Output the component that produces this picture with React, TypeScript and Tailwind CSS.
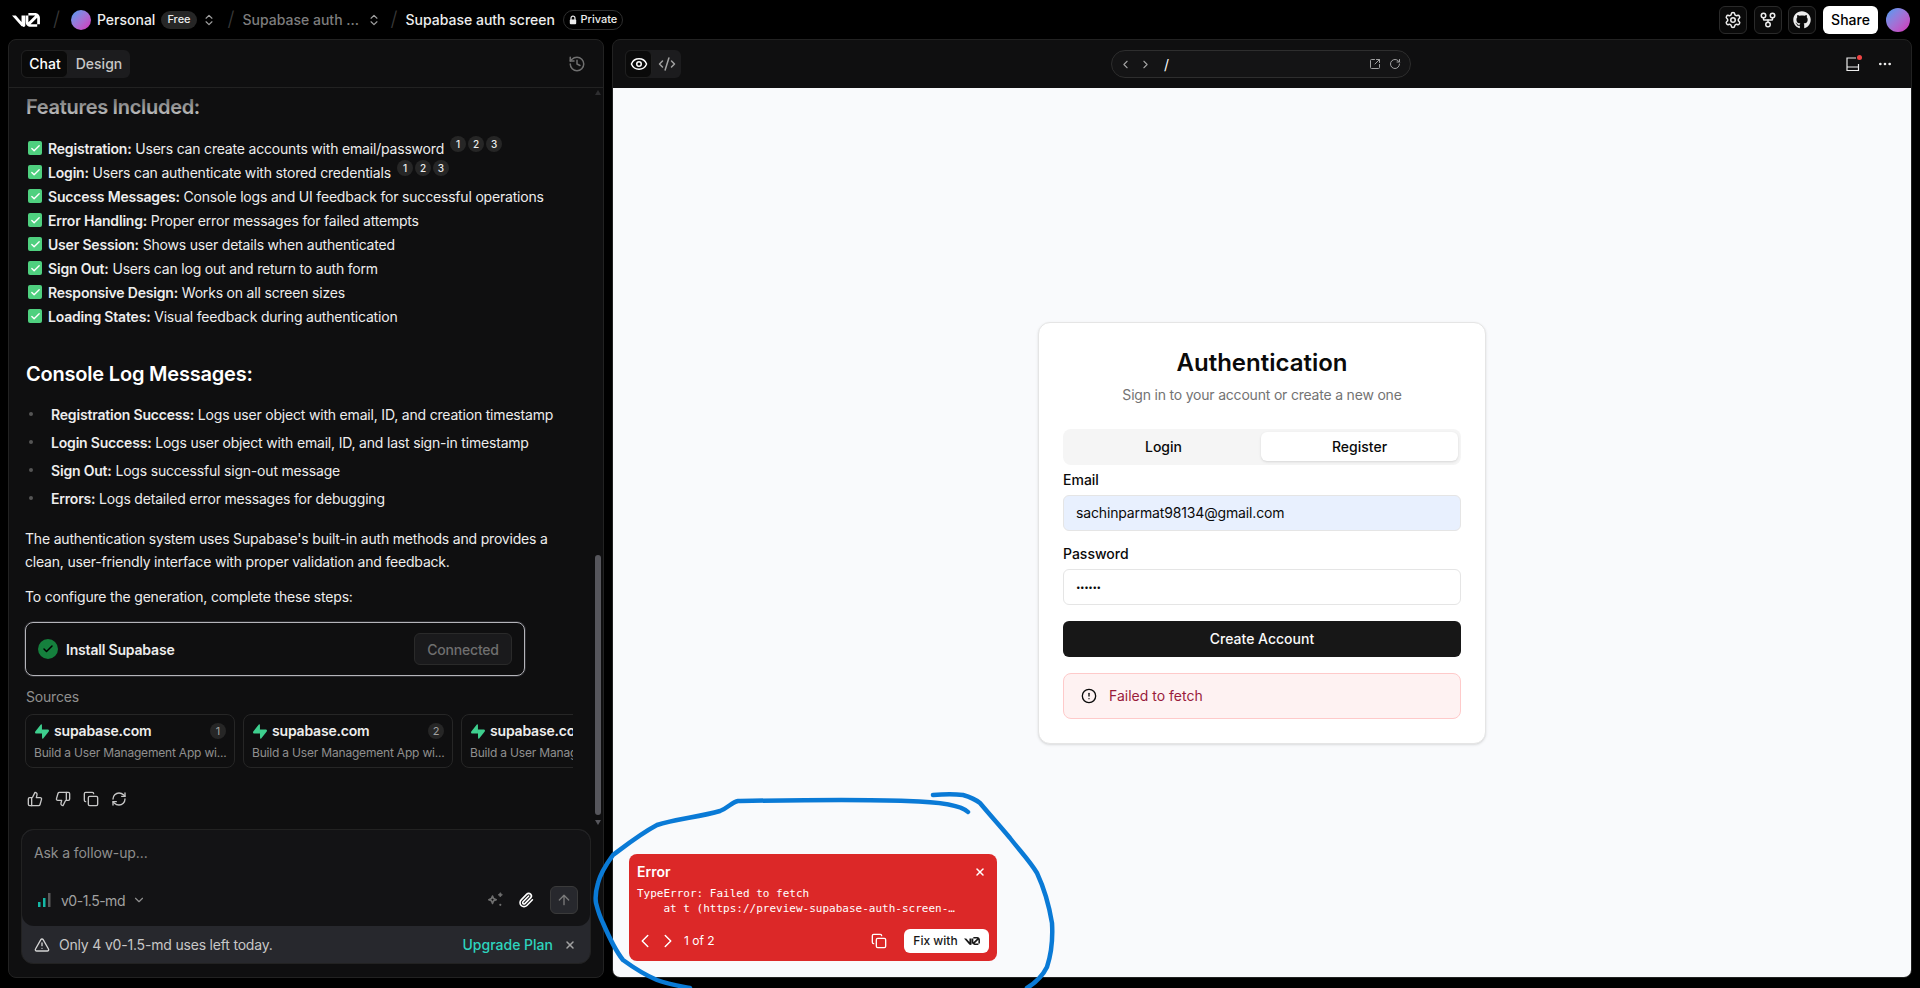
import {
  ArrowUp,
  Check,
  ChevronDown,
  ChevronLeft,
  ChevronRight,
  ChevronsUpDown,
  CircleAlert,
  CodeXml,
  Copy,
  Ellipsis,
  Eye,
  GitFork,
  History,
  Paperclip,
  RotateCw,
  RefreshCw,
  Settings,
  SquareArrowOutUpRight,
  ThumbsDown,
  ThumbsUp,
  TriangleAlert,
  X,
} from "lucide-react";
import { FaGithub } from "react-icons/fa";

const features = [
  { title: "Registration:", text: "Users can create accounts with email/password", refs: true },
  { title: "Login:", text: "Users can authenticate with stored credentials", refs: true },
  { title: "Success Messages:", text: "Console logs and UI feedback for successful operations" },
  { title: "Error Handling:", text: "Proper error messages for failed attempts" },
  { title: "User Session:", text: "Shows user details when authenticated" },
  { title: "Sign Out:", text: "Users can log out and return to auth form" },
  { title: "Responsive Design:", text: "Works on all screen sizes" },
  { title: "Loading States:", text: "Visual feedback during authentication" },
];

const logs = [
  { title: "Registration Success:", text: "Logs user object with email, ID, and creation timestamp" },
  { title: "Login Success:", text: "Logs user object with email, ID, and last sign-in timestamp" },
  { title: "Sign Out:", text: "Logs successful sign-out message" },
  { title: "Errors:", text: "Logs detailed error messages for debugging" },
];

function V0Logo({ className }: { className?: string }) {
  return (
    <svg viewBox="0 0 40 20" fill="currentColor" className={className}>
      <path d="M23.3919 0H32.9188C36.7819 0 39.9136 3.13165 39.9136 6.99475V16.0805H36.0006V6.99475C36.0006 6.90167 35.9969 6.80925 35.9898 6.71766L26.4628 16.079C26.4949 16.08 26.5272 16.0805 26.5595 16.0805H36.0006V19.7762H26.5595C22.6964 19.7762 19.4788 16.6139 19.4788 12.7508V3.68923H23.3919V12.7508C23.3919 12.9253 23.4054 13.0977 23.4316 13.2668L33.1682 3.6995C33.0861 3.6927 33.003 3.68923 32.9188 3.68923H23.3919V0Z" />
      <path d="M13.7688 19.0956L0 3.68759H5.53933L13.6231 12.7337V3.68759H19.0277V17.5746C19.0277 19.6705 16.4199 20.6584 15.0048 19.0956H13.7688Z" />
    </svg>
  );
}

function SupabaseLogo() {
  return (
    <svg viewBox="0 0 109 113" className="ml-[1px] w-[14px] h-[15px] shrink-0" fill="#3ecf8e">
      <path d="M63.7076 110.284C60.8481 113.885 55.0502 111.912 54.9813 107.314L53.9738 40.0627L99.1935 40.0627C107.384 40.0627 111.952 49.5228 106.859 55.9374L63.7076 110.284Z" />
      <path d="M45.317 2.07103C48.1765 -1.53037 53.9745 0.442937 54.0434 5.041L54.4849 72.2922H9.83113C1.64038 72.2922 -2.92775 62.8321 2.1655 56.4175L45.317 2.07103Z" />
    </svg>
  );
}

function Slash() {
  return <span className="text-[#3a3a3a] text-[20px] font-light leading-none">/</span>;
}

function IconBox({ children }: { children: React.ReactNode }) {
  return (
    <div className="w-[28px] h-[28px] rounded-md border border-[#2a2a2a] bg-[#0a0a0a] flex items-center justify-center text-[#ededed]">
      {children}
    </div>
  );
}

function Avatar({ size }: { size: string }) {
  return <div className={`${size} rounded-full bg-gradient-to-br from-[#2f9df4] to-[#d41fb8] shrink-0`} />;
}

function TopBar() {
  return (
    <header className="h-[39px] shrink-0 flex items-center pl-[12px] pr-[10px] text-[14px] bg-black">
      <V0Logo className="w-[28px] h-[14px] text-white" />
      <div className="ml-[13px]"><Slash /></div>
      <div className="ml-[11px]"><Avatar size="w-[20px] h-[20px]" /></div>
      <span className="ml-[6px] font-medium text-[#ededed]">Personal</span>
      <span className="ml-[6px] h-[18px] px-[6px] rounded-full bg-[#262626] text-[#ededed] text-[11px] font-medium flex items-center">Free</span>
      <ChevronsUpDown className="ml-[5px] w-[14px] h-[14px] text-[#a1a1a1]" />
      <div className="ml-[12px]"><Slash /></div>
      <span className="ml-[8px] font-medium text-[#7d7d7d] w-[112px] whitespace-nowrap">Supabase auth ...</span>
      <ChevronsUpDown className="ml-[12px] w-[14px] h-[14px] text-[#a1a1a1]" />
      <div className="ml-[10px]"><Slash /></div>
      <span className="ml-[8px] font-medium text-[#ededed] whitespace-nowrap">Supabase auth screen</span>
      <span className="ml-[8px] h-[20px] w-[60px] rounded-full border border-[#2e2e2e] text-[#ededed] text-[11px] font-medium flex items-center justify-center gap-[2px]">
        <svg viewBox="0 0 10 10" className="w-[10px] h-[10px]">
          <path d="M3 5V3.2C3 2 3.9 1.2 5 1.2C6.1 1.2 7 2 7 3.2V5" fill="none" stroke="currentColor" strokeWidth="1.2" />
          <rect x="1.8" y="4.5" width="6.4" height="4.8" rx="1" fill="currentColor" />
        </svg>
        Private
      </span>
      <div className="ml-auto flex items-center gap-[6px]">
        <div className="mr-[1px]"><IconBox><Settings className="w-[18px] h-[18px]" /></IconBox></div>
        <IconBox><GitFork className="w-[18px] h-[18px]" /></IconBox>
        <IconBox><FaGithub className="w-[18px] h-[18px]" /></IconBox>
        <button className="ml-[1px] h-[28px] w-[55px] rounded-md bg-white text-black text-[14px] font-medium">Share</button>
        <Avatar size="w-[24px] h-[24px] ml-[2px]" />
      </div>
    </header>
  );
}

function Refs() {
  return (
    <span className="inline-flex ml-[6px] gap-[2px] -translate-y-[4px]">
      {[1, 2, 3].map((n) => (
        <span key={n} className="w-[16px] h-[16px] rounded-full bg-[#262626] text-[#ededed] text-[10px] font-medium leading-[16px] text-center">
          {n}
        </span>
      ))}
    </span>
  );
}

function SourceCard({ n }: { n: number }) {
  return (
    <div className="w-[210px] h-[54px] shrink-0 rounded-lg border border-[#262626] px-[8px] pt-[6px]">
      <div className="flex items-center gap-[5px]">
        <SupabaseLogo />
        <span className="text-[14px] font-semibold text-[#ededed] leading-[20px]">supabase.com</span>
        <span className="ml-auto w-[16px] h-[16px] rounded-full bg-[#262626] text-[#a1a1a1] text-[11px] leading-[16px] text-center">{n}</span>
      </div>
      <div className="text-[12px] text-[#8f8f8f] leading-[16px] mt-[4px] whitespace-nowrap">Build a User Management App wi...</div>
    </div>
  );
}

function ChatPanel() {
  return (
    <section className="w-[596px] shrink-0 flex flex-col rounded-t-lg rounded-b-lg border border-[#222222] bg-[#0f0f10] overflow-hidden relative">
      <div className="h-[48px] shrink-0 flex items-center justify-between pl-[12px] pr-[17px] border-b border-[#222222]">
        <div className="flex h-[28px] w-[109px] rounded-md bg-[#1c1c1e] text-[14px] font-medium">
          <div className="w-[47px] pl-px rounded-md bg-[#0a0a0a] border border-[#1f1f1f] text-white flex items-center justify-center">Chat</div>
          <div className="flex-1 text-[#c7c7c7] flex items-center justify-center">Design</div>
        </div>
        <History className="w-[18px] h-[18px] text-[#6f6f6f]" />
      </div>

      <div className="h-[741px] shrink-0 overflow-hidden relative pl-[16px] pr-[20px] text-[14px] text-[#ededed] tracking-[-0.19px]">
        <h2 className="ml-[1px] text-[20px] leading-[28px] font-semibold text-[#ededed] mt-[5px] tracking-[-0.3px]">Features Included:</h2>
        <ul className="mt-[15px] flex flex-col">
          {features.map((f) => (
            <li key={f.title} className="h-[24px] flex items-center whitespace-nowrap">
              <span className="ml-[3px] w-[14px] h-[14px] rounded-[2px] bg-[#4fd07f] flex items-center justify-center shrink-0">
                <Check className="w-[11px] h-[11px] text-white" strokeWidth={3} />
              </span>
              <span className="ml-[6px]">
                <span className="font-semibold">{f.title}</span> {f.text}
              </span>
              {f.refs && <Refs />}
            </li>
          ))}
        </ul>
        <h2 className="ml-[1px] mt-[32px] text-[20px] leading-[28px] font-semibold text-white tracking-[-0.2px]">Console Log Messages:</h2>
        <ul className="mt-[14px] flex flex-col gap-[4px]">
          {logs.map((l) => (
            <li key={l.title} className="h-[24px] flex items-center whitespace-nowrap">
              <span className="ml-[4px] w-[4px] h-[4px] rounded-full bg-[#555555] shrink-0" />
              <span className="ml-[18px]">
                <span className="font-semibold">{l.title}</span> {l.text}
              </span>
            </li>
          ))}
        </ul>
        <p className="mt-[17px] leading-[23px]">
          The authentication system uses Supabase's built-in auth methods and provides a
          <br />
          clean, user-friendly interface with proper validation and feedback.
        </p>
        <p className="mt-[12px] leading-[24px]">To configure the generation, complete these steps:</p>
        <div className="mt-[13px] w-[500px] h-[54px] rounded-lg border border-[#b4b4ba] shadow-[0_0_0_1px_#2a2a2e] flex items-center pl-[12px] pr-[12px]">
          <span className="w-[20px] h-[20px] rounded-full bg-[#15803d] flex items-center justify-center">
            <Check className="w-[12px] h-[12px] text-black" strokeWidth={3} />
          </span>
          <span className="ml-[8px] font-semibold text-[#ededed]">Install Supabase</span>
          <div className="ml-auto w-[98px] h-[32px] rounded-md border border-[#2a2a2a] bg-[#1a1a1c] text-[#6f6f6f] font-medium flex items-center justify-center">Connected</div>
        </div>
        <div className="ml-[1px] mt-[11px] text-[#8f8f8f] leading-[20px]">Sources</div>
        <div className="mt-[7px] w-[548px] flex gap-[8px] overflow-hidden">
          <SourceCard n={1} />
          <SourceCard n={2} />
          <SourceCard n={3} />
        </div>
        <div className="mt-[23px] flex gap-[12px] text-[#c7c7c7] pl-[2px]">
          <ThumbsUp className="w-[16px] h-[16px]" />
          <ThumbsDown className="w-[16px] h-[16px]" />
          <Copy className="w-[16px] h-[16px]" />
          <RefreshCw className="w-[16px] h-[16px]" />
        </div>
        <div className="absolute top-0 left-0 right-0 h-[36px] bg-gradient-to-b from-[#0f0f10]/80 to-transparent" />
        <div className="absolute right-[2px] top-[467px] w-[6px] h-[260px] rounded-full bg-[#56565c]" />
        <div className="absolute right-[2px] top-[2px] w-0 h-0 border-x-[3px] border-x-transparent border-b-[5px] border-b-[#2e2e30]" />
        <div className="absolute right-[2px] bottom-[4px] w-0 h-0 border-x-[3px] border-x-transparent border-t-[5px] border-t-[#56565c]" />
      </div>

      <div className="mx-[12px] rounded-xl bg-[#27282d] border border-[#222222] overflow-hidden text-[14px]">
        <div className="h-[96px] rounded-xl bg-[#131315] px-[12px] pt-[13px] flex flex-col">
          <div className="text-[#8f8f8f] leading-[20px] tracking-[-0.1px]">Ask a follow-up...</div>
          <div className="mt-auto mb-[12px] flex items-center">
            <svg viewBox="0 0 14 14" className="w-[14px] h-[14px] ml-[4px]">
              <rect x="0" y="9" width="2.5" height="5" fill="#14b8a6" />
              <rect x="5" y="5" width="2.5" height="9" fill="#14b8a6" />
              <rect x="10" y="0" width="2.5" height="14" fill="#5a5a5a" />
            </svg>
            <span className="ml-[9px] text-[#a1a1a1] tracking-[-0.5px]">v0-1.5-md</span>
            <ChevronDown className="ml-[7px] w-[14px] h-[14px] text-[#8f8f8f]" />
            <svg viewBox="0 0 16 16" className="ml-auto w-[16px] h-[16px] text-[#6f6f6f]" fill="currentColor" stroke="currentColor" strokeLinejoin="round">
              <path d="M4.5 4L5.6 6.6L8.2 7.7L5.6 8.8L4.5 11.4L3.4 8.8L0.8 7.7L3.4 6.6Z" fill="none" strokeWidth="1.6" />
              <path d="M12.3 0.6L13.2 1.9L14.5 2.8L13.2 3.7L12.3 5L11.4 3.7L10.1 2.8L11.4 1.9Z" strokeWidth="0.6" />
              <circle cx="12.3" cy="12.8" r="1.1" stroke="none" />
            </svg>
            <Paperclip className="ml-[14px] w-[16px] h-[16px] text-white" strokeWidth={2.4} />
            <div className="ml-[16px] w-[28px] h-[28px] rounded-md bg-[#27282d] border border-[#3a3a3a] flex items-center justify-center">
              <ArrowUp className="w-[16px] h-[16px] text-[#7a7a7a]" />
            </div>
          </div>
        </div>
        <div className="h-[37px] flex items-center pl-[12px] pr-[14px]">
          <TriangleAlert className="w-[16px] h-[16px] text-[#d4d4d4]" />
          <span className="ml-[9px] text-[#c7c7c7] tracking-[-0.19px]">Only 4 v0-1.5-md uses left today.</span>
          <span className="ml-auto text-[#2dd4bf] font-medium">Upgrade Plan</span>
          <X className="ml-[11px] w-[12px] h-[12px] text-[#a1a1a1]" strokeWidth={3} />
        </div>
      </div>
    </section>
  );
}

function AuthCard() {
  return (
    <div className="w-[448px] h-[422px] rounded-xl border border-[#e5e5e5] bg-white shadow-sm px-[24px] pt-[24px] text-[#0a0a0a]">
      <h1 className="text-[24px] leading-[32px] font-semibold text-center">Authentication</h1>
      <p className="mt-[6px] text-[14px] leading-[20px] text-[#737373] text-center tracking-[-0.2px]">Sign in to your account or create a new one</p>
      <div className="mt-[24px] h-[36px] rounded-lg bg-[#f5f5f5] flex items-center p-[3px] text-[14px] font-medium">
        <div className="flex-1 text-center">Login</div>
        <div className="w-[197px] h-[29px] rounded-md bg-white shadow-sm flex items-center justify-center">Register</div>
      </div>
      <label className="block mt-[6px] text-[14px] font-medium leading-[18px]">Email</label>
      <div className="mt-[6px] h-[36px] rounded-md border border-[#e5e5e5] bg-[#e8f0fe] flex items-center px-[12px] text-[14px] tracking-[-0.15px]">sachinparmat98134@gmail.com</div>
      <label className="block mt-[14px] text-[14px] font-medium leading-[18px]">Password</label>
      <div className="mt-[6px] h-[36px] rounded-md border border-[#e5e5e5] bg-white flex items-center px-[12px] text-[8px] tracking-[-0.4px]">••••••</div>
      <button className="mt-[16px] w-full h-[36px] rounded-md bg-[#171717] text-[#fafafa] text-[14px] font-medium">Create Account</button>
      <div className="mt-[16px] h-[46px] rounded-lg border border-[#fecaca] bg-[#fef2f2] flex items-center pl-[17px] text-[14px] text-[#991b3b]">
        <CircleAlert className="w-[16px] h-[16px] text-[#0a0a0a]" />
        <span className="ml-[12px]">Failed to fetch</span>
      </div>
    </div>
  );
}

function ErrorToast() {
  return (
    <div className="absolute left-[16px] bottom-[16px] w-[368px] h-[107px] rounded-lg bg-[#dc2828] text-white px-[8px] pt-[8px]">
      <div className="flex items-center justify-between pr-[3px]">
        <span className="text-[14px] font-semibold leading-[20px]">Error</span>
        <X className="w-[12px] h-[12px]" strokeWidth={3} />
      </div>
      <pre className="mt-[4px] text-[11px] leading-[15px] text-white font-['DejaVu_Sans_Mono',monospace] whitespace-pre">
        {"TypeError: Failed to fetch\n    at t (https://preview-supabase-auth-screen-\u2026"}
      </pre>
      <div className="mt-[13px] flex items-center">
        <ChevronLeft className="-ml-[3px] w-[22px] h-[22px]" strokeWidth={1.6} />
        <ChevronRight className="ml-[1px] w-[22px] h-[22px]" strokeWidth={1.6} />
        <span className="ml-[5px] text-[12px]">1 of 2</span>
        <Copy className="ml-auto w-[16px] h-[16px]" />
        <button className="ml-[17px] w-[85px] h-[24px] rounded-md bg-white text-[#171717] text-[12px] font-medium flex items-center justify-center gap-[6px]">
          Fix with
          <V0Logo className="w-[16px] h-[8px]" />
        </button>
      </div>
    </div>
  );
}

function PreviewPanel() {
  return (
    <section className="flex-1 flex flex-col rounded-lg border border-[#222222] bg-[#0f0f10] overflow-hidden">
      <div className="h-[48px] shrink-0 flex items-center pl-[12px] pr-[18px] relative">
        <div className="flex h-[28px] w-[56px] rounded-md bg-[#1c1c1e]">
          <div className="w-[27px] rounded-md bg-[#0a0a0a] border border-[#1f1f1f] flex items-center justify-center text-white">
            <Eye className="w-[18px] h-[18px]" />
          </div>
          <div className="flex-1 flex items-center justify-center text-[#a1a1a1]">
            <CodeXml className="w-[18px] h-[18px]" />
          </div>
        </div>
        <div className="ml-[430px] w-[300px] h-[28px] rounded-full border border-[#2e2e2e] bg-[#141415] flex items-center pl-[7px] pr-[9px] text-[#a1a1a1]">
          <ChevronLeft className="w-[13px] h-[13px]" />
          <ChevronRight className="ml-[7px] w-[13px] h-[13px]" />
          <span className="ml-[12px] text-[14px] text-white">/</span>
          <SquareArrowOutUpRight className="ml-auto w-[12px] h-[12px]" />
          <RotateCw className="ml-[8px] w-[12px] h-[12px]" />
        </div>
        <div className="ml-auto relative mr-[16px]">
          <svg viewBox="0 0 16 16" className="w-[16px] h-[16px] text-[#ededed]" fill="none" stroke="currentColor" strokeWidth="1.2">
            <path d="M13.5 8V14.5H2V2H11" />
            <path d="M2 11H13.5" />
          </svg>
          <span className="absolute -top-[1px] -right-[1px] w-[5px] h-[5px] rounded-full bg-[#ef4444]" />
        </div>
        <Ellipsis className="w-[16px] h-[16px] text-[#ededed]" />
      </div>
      <div className="flex-1 relative bg-[#f9fafc] flex items-center justify-center">
        <AuthCard />
        <ErrorToast />
      </div>
    </section>
  );
}

function Scribble() {
  return (
    <svg viewBox="0 0 1920 988" className="absolute inset-0 w-full h-full pointer-events-none" fill="none" stroke="#0a7ad6" strokeWidth="4.5" strokeLinecap="round" strokeLinejoin="round">
      <path d="M968 812C962 806 945 802 907 801C860 799 800 800 738 801C732 802 728 808 720 811C700 817 675 819 657 825C640 834 625 846 613 855C605 866 600 875 598 883C596 890 595 897 596 903C598 911 600 917 603 923C609 937 615 950 623 960C634 968 645 975 657 980C668 984 680 986 690 988" />
      <path d="M933 795C945 794 955 794 963 795C970 797 975 799 980 803C990 815 1000 826 1010 838C1020 851 1029 860 1037 873C1044 888 1049 905 1052 923C1053 940 1051 955 1047 967C1042 977 1035 983 1027 988" />
    </svg>
  );
}

export default function App() {
  return (
    <div className="relative w-[1920px] h-[988px] overflow-hidden bg-black font-['Inter','Liberation_Sans',sans-serif] flex flex-col">
      <TopBar />
      <main className="h-[939px] shrink-0 flex gap-[8px] px-[8px]">
        <ChatPanel />
        <PreviewPanel />
      </main>
      <Scribble />
    </div>
  );
}
